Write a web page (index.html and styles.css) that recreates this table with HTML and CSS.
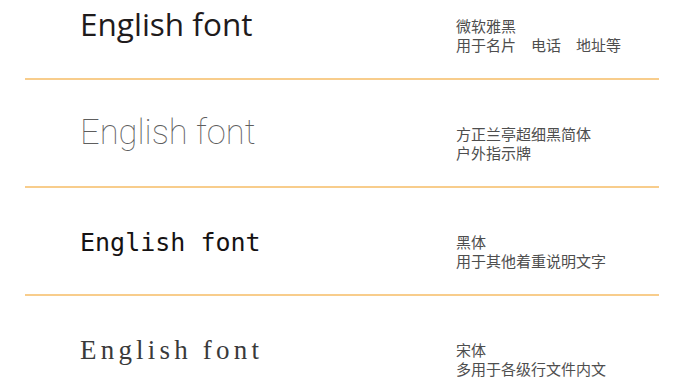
FILE: index.html
```html
<!DOCTYPE html>
<html lang="zh-CN">
<head>
<meta charset="utf-8">
<title>English font</title>
<link rel="stylesheet" href="styles.css">
</head>
<body>
<div class="sheet">
  <div class="row row-first">
    <div class="sample sample-yahei">English font</div>
    <div class="note">
      <div class="note-title">微软雅黑</div>
      <div class="note-use">用于名片　电话　地址等</div>
    </div>
  </div>
  <div class="row">
    <div class="sample sample-thin">English font</div>
    <div class="note">
      <div class="note-title">方正兰亭超细黑简体</div>
      <div class="note-use">户外指示牌</div>
    </div>
  </div>
  <div class="row">
    <div class="sample sample-hei">English font</div>
    <div class="note">
      <div class="note-title">黑体</div>
      <div class="note-use">用于其他着重说明文字</div>
    </div>
  </div>
  <div class="row row-last">
    <div class="sample sample-song">English font</div>
    <div class="note">
      <div class="note-title">宋体</div>
      <div class="note-use">多用于各级行文件内文</div>
    </div>
  </div>
</div>
</body>
</html>
```
FILE: styles.css
```css
html, body {
  margin: 0;
  padding: 0;
  background: #ffffff;
  overflow: hidden;
}

.sheet {
  margin-left: 25px;
  width: 634px;
}

.row {
  display: flex;
  align-items: flex-start;
  height: 106px;
  border-bottom: 2px solid #f8cd8c;
  padding-left: 55px;
  box-sizing: content-box;
}

.row-first {
  margin-top: -28px;
}

.row-last {
  border-bottom: none;
}

.sample {
  width: 376px;
  flex: none;
  line-height: 40px;
  white-space: nowrap;
}

.sample-yahei {
  font-family: "Open Sans", "Noto Sans", sans-serif;
  font-size: 31.5px;
  color: #1f1b1c;
  padding-top: 32px;
}

.sample-thin {
  font-family: Roboto, "Noto Sans", sans-serif;
  font-weight: 100;
  font-size: 34.5px;
  color: #5e5e5e;
  padding-top: 32px;
}

.sample-hei {
  font-family: "DejaVu Sans Mono", monospace;
  font-size: 25px;
  color: #151213;
  padding-top: 35px;
}

.sample-song {
  font-family: "Liberation Serif", serif;
  font-size: 27px;
  letter-spacing: 4.2px;
  color: #3a3a3a;
  padding-top: 34px;
}

.note {
  padding-top: 44px;
  font-family: "Noto Sans CJK SC", sans-serif;
  font-size: 15px;
  line-height: 19px;
  color: #4e4e4e;
}
```
